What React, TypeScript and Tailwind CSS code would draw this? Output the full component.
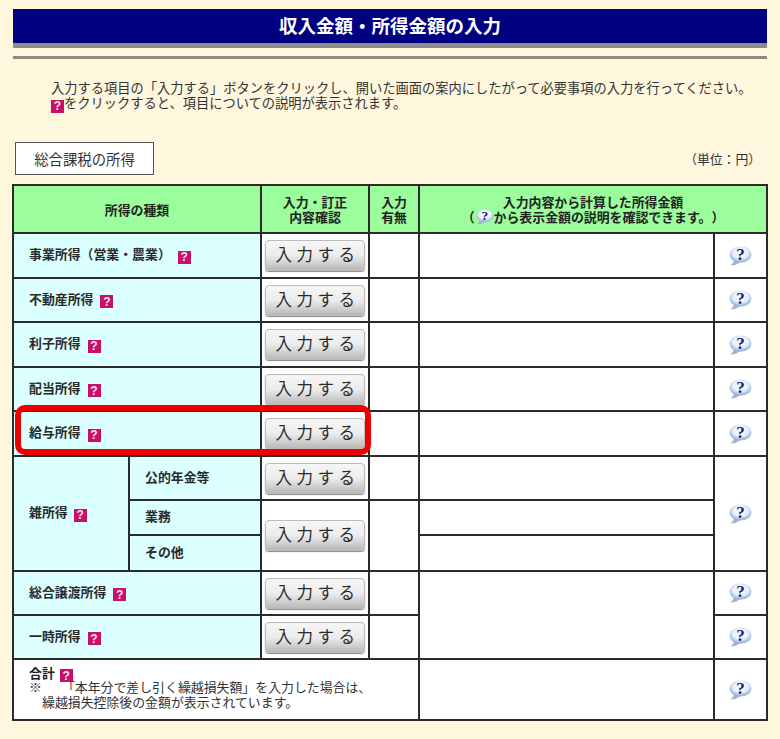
import React from 'react';

const cjk = { fontFamily: '"Noto Sans CJK JP", sans-serif' };

const HelpMark: React.FC<{ className?: string }> = ({ className = '' }) => (
  <span
    className={`inline-flex h-[13px] w-[13px] items-center justify-center bg-[#c8106a] align-[-2px] text-[12px] leading-none font-bold text-[#ffe0f0] ${className}`}
    style={{ fontFamily: '"Liberation Sans", sans-serif' }}
  >
    ?
  </span>
);

const Bubble: React.FC<{ small?: boolean }> = ({ small }) => (
  <svg
    viewBox="0 0 24 20"
    className={small ? 'inline-block h-[16px] w-[19px] align-[-3px]' : 'mx-auto block h-[20px] w-[24px] -translate-x-[1px]'}
  >
    <defs>
      <radialGradient id="bub" cx="50%" cy="40%" r="62%">
        <stop offset="0%" stopColor="#ffffff" />
        <stop offset="55%" stopColor="#e6effa" />
        <stop offset="100%" stopColor="#7ea4d6" />
      </radialGradient>
    </defs>
    <path d="M6 14 C5.500 16.500 4 18 2.500 19.500 C6 19.500 10 18.500 12 16 Z" fill="#a3b5ca" />
    <ellipse cx="12.500" cy="8.500" rx="11" ry="8" fill="url(#bub)" />
    <text
      x="12.500"
      y="14"
      textAnchor="middle"
      fontSize="17"
      fontWeight="700"
      fill="#101c78"
      style={{ fontFamily: '"Liberation Serif", serif' }}
    >
      ?
    </text>
  </svg>
);

const InputButton = () => (
  <button className="mx-auto flex h-[31px] w-[100px] items-center justify-center rounded-[4px] border border-[#bbb] bg-gradient-to-b from-[#f6f6f6] via-[#ececec] to-[#b9b9b9] pb-[2px] pl-[5px] text-[16.5px] tracking-[4.5px] text-[#2b2b2b] shadow-[0_1px_1px_#888]">
    入力する
  </button>
);

const cell = 'border-2 border-[#2b2b2b]';
const head = `${cell} bg-[#9cfd9c] text-center text-[12.9px] leading-[15px] font-bold text-[#222]`;
const label = `${cell} bg-[#dcffff] pb-[3px] pl-[15px] text-[12.9px] font-bold text-[#2a2a2a]`;
const plain = `${cell} bg-white`;

const simpleRows = [
  { name: '事業所得\uFF08営業・農業\uFF09', h: 'h-[45px]' },
  { name: '不動産所得', h: 'h-[44px]' },
  { name: '利子所得', h: 'h-[45px]' },
  { name: '配当所得', h: 'h-[44px]' },
  { name: '給与所得', h: 'h-[45px]' },
];

export default function App() {
  return (
    <div
      className="relative h-[739px] w-[780px] overflow-hidden bg-[#fff6de] text-[#333] [text-spacing-trim:space-all]"
      style={cjk}
    >
      <div className="px-[13px] pt-[9px]">
        <h1 className="flex h-[39px] items-center justify-center border-b-[5px] border-[#8c8c8c] bg-[#000080] text-[18.5px] font-bold text-white">
          収入金額・所得金額の入力
        </h1>
        <div className="mt-[8px] h-[3px] bg-[#8a8a80]" />
      </div>

      <div className="mt-[21px] pl-[51px] text-[13.25px] leading-[15px]">
        <p className="h-[15px]">入力する項目の「入力する」ボタンをクリックし、開いた画面の案内にしたがって必要事項の入力を行ってください。</p>
        <p className="h-[15px]">
          <HelpMark />
          をクリックすると、項目についての説明が表示されます。
        </p>
      </div>

      <div className="mt-[32px] flex items-center justify-between pr-[19px] pl-[15px]">
        <div className="flex h-[33px] w-[139px] items-center justify-center border border-[#555] bg-white text-[14.4px]">
          総合課税の所得
        </div>
        <span className="text-[12.8px]">{'\uFF08単位\uFF1A円\uFF09'}</span>
      </div>

      <div className="mt-[9px] px-[12px]">
        <table className="w-[754px] table-fixed border-collapse">
          <colgroup>
            <col className="w-[116px]" />
            <col className="w-[132px]" />
            <col className="w-[108px]" />
            <col className="w-[50px]" />
            <col className="w-[295px]" />
            <col className="w-[53px]" />
          </colgroup>
          <tbody>
            <tr className="h-[48px]">
              <th colSpan={2} className={head}>所得の種類</th>
              <th className={head}>入力・訂正<br />内容確認</th>
              <th className={head}>入力<br />有無</th>
              <th colSpan={2} className={head}>
                入力内容から計算した所得金額<br />
                {'\uFF08'}<Bubble small />{'から表示金額の説明を確認できます。\uFF09'}
              </th>
            </tr>
            {simpleRows.map((row) => (
              <tr key={row.name} className={row.h}>
                <td colSpan={2} className={label}>
                  {row.name} <HelpMark className="ml-[4px]" />
                </td>
                <td className={plain}><InputButton /></td>
                <td className={plain} />
                <td className={plain} />
                <td className={plain}><Bubble /></td>
              </tr>
            ))}
            <tr className="h-[44px]">
              <td rowSpan={3} className={label}>
                雑所得 <HelpMark className="ml-[3px]" />
              </td>
              <td className={label}>公的年金等</td>
              <td className={plain}><InputButton /></td>
              <td className={plain} />
              <td className={plain} />
              <td rowSpan={3} className={plain}><Bubble /></td>
            </tr>
            <tr className="h-[35px]">
              <td className={label}>業務</td>
              <td rowSpan={2} className={plain}><InputButton /></td>
              <td rowSpan={2} className={plain} />
              <td className={plain} />
            </tr>
            <tr className="h-[36px]">
              <td className={label}>その他</td>
              <td className={plain} />
            </tr>
            <tr className="h-[44px]">
              <td colSpan={2} className={label}>
                総合譲渡所得 <HelpMark className="ml-[4px]" />
              </td>
              <td className={plain}><InputButton /></td>
              <td className={plain} />
              <td rowSpan={2} className={plain} />
              <td className={plain}><Bubble /></td>
            </tr>
            <tr className="h-[44px]">
              <td colSpan={2} className={label}>
                一時所得 <HelpMark className="ml-[4px]" />
              </td>
              <td className={plain}><InputButton /></td>
              <td className={plain} />
              <td className={plain}><Bubble /></td>
            </tr>
            <tr className="h-[61px]">
              <td colSpan={4} className={`${plain} pb-[4px] pl-[15px] text-[12.9px] leading-[14.5px] text-[#333]`}>
                <div className="h-[14.5px] font-bold text-[#222]">
                  合計 <HelpMark className="ml-[2px]" />
                </div>
                <div>
                  ※<span className="ml-[20px]">「本年分で差し引く繰越損失額」を入力した場合は、</span>
                </div>
                <div className="pl-[13px]">繰越損失控除後の金額が表示されています。</div>
              </td>
              <td className={plain} />
              <td className={plain}><Bubble /></td>
            </tr>
          </tbody>
        </table>
      </div>

      {/* 給与所得の行を囲む赤枠 */}
      <div className="absolute top-[405px] left-[15px] h-[50px] w-[356px] rounded-[10px] border-[6px] border-[#ee0000]" />
    </div>
  );
}
